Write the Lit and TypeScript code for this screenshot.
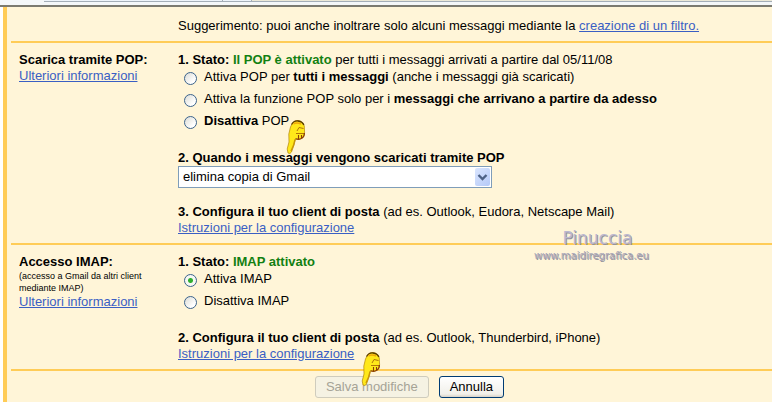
import { LitElement, html, css, nothing } from "lit";
import { customElement } from "lit/decorators.js";

@customElement("pointing-hand")
class PointingHand extends LitElement {
  static styles = css`
    :host { display: block; width: 20px; height: 36px; pointer-events: none; }
    svg { display: block; }
  `;
  render() {
    return html`<svg width="20" height="36" viewBox="0 0 20 36" aria-hidden="true">
      <path d="M2 34 L1.2 30 L3 23 L2.8 15 L4.5 8 L6 5 Q8 1 12 1.5 Q17 2 18.3 7 L18.6 14 Q18.5 18.5 15.5 19.5 L12.5 20.5 L9.5 20 L8 26 L5.5 33 Q4 35.5 2 34Z" fill="#ffe81a" stroke="#b08408" stroke-width="0.7"/>
      <path d="M5.5 5.5 Q8 1.5 12 2 Q16.5 2.5 17.8 6" fill="none" stroke="#5a3c00" stroke-width="1.3"/>
      <path d="M7.5 4.8 Q11 3 15 5" fill="none" stroke="#f0a80c" stroke-width="1.6"/>
      <path d="M17.5 9.5 L13 8.5 L11 12 M10 14.5 L18 14.5" fill="none" stroke="#a86808" stroke-width="0.9"/>
      <path d="M9.5 19.8 L12.5 20.4 L15.5 19.4 Q18.3 18 18.5 14 M12.5 16 V20 M15.5 16 V19" fill="none" stroke="#8a3c08" stroke-width="1.1"/>
      <path d="M9 20.5 L7.6 26 L5 32" fill="none" stroke="#c89408" stroke-width="1.3"/>
    </svg>`;
  }
}

@customElement("app-root")
class AppRoot extends LitElement {
  static styles = css`
    :host {
      display: block;
      min-height: 100vh;
      overflow: hidden;
      background: #fff;
      color: #000;
      font: 13px/16px "Liberation Sans", Arial, sans-serif;
    }
    * { box-sizing: border-box; }
    .chrome {
      height: 7px;
      background: #f4f7f9;
      border-bottom: 2px solid #7b7a70;
    }
    .field {
      display: grid;
      grid-template-columns: 179px 29px 1fr;
      height: 2px;
      margin-left: 44px;
      border-bottom: 1px solid #a4aeb8;
      background: #eef4fa;
    }
    .field span { border-right: 1px solid #a4aeb8; }
    .field span:last-child { border: 0; background: #ece9d8; }
    .panel {
      margin-left: 3px;
      padding-left: 4px;
      min-height: calc(100vh - 7px);
      border-left: 4px solid #ffcc57;
      background: #fff5d8;
    }
    .row {
      position: relative;
      display: grid;
      grid-template-columns: 159px minmax(0, 1fr);
      padding: 9px 0 7px 8px;
      border-bottom: 2px solid #ffcc57;
    }
    .tip { padding-top: 11px; }
    .tip .body { grid-column: 2; }
    h2, h3, p, fieldset { margin: 0; padding: 0; border: 0; font-size: 13px; min-width: 0; }
    h3 { font-weight: 400; }
    p.small { font-size: 9px; line-height: 12px; }
    a { color: #3a5fc4; }
    .on { color: #128012; }
    .option {
      position: relative;
      display: flex;
      align-items: center;
      gap: 7px;
      height: 22px;
      padding: 0 0 2px 6px;
    }
    .option label { padding-bottom: 2px; }
    .option input {
      appearance: none;
      flex: none;
      width: 13px;
      height: 13px;
      margin: 0;
      border: 1px solid #3b638c;
      border-radius: 50%;
      background: linear-gradient(135deg, #dcdcd6, #fff 75%);
    }
    .option input:checked {
      background: radial-gradient(circle, #2fae2f 0 2px, #f7f8f3 3px);
    }
    .option pointing-hand { position: absolute; z-index: 1; top: 7px; left: 108px; }
    .step { margin-top: 16px; }
    .step label { display: block; }
    .select { position: relative; width: 314px; max-width: 100%; height: 22px; }
    select {
      appearance: none;
      display: block;
      width: 100%;
      height: 22px;
      padding: 0 20px 0 4px;
      border: 1px solid #7f9db9;
      border-radius: 0;
      background: #fff;
      color: #000;
      font: inherit;
    }
    .arrow {
      position: absolute;
      top: 2px;
      right: 2px;
      width: 15px;
      height: 18px;
      border-radius: 2px;
      background: linear-gradient(135deg, #dbe6fe, #b4c9f8);
      pointer-events: none;
    }
    .arrow svg { display: block; }
    .actions { display: flex; justify-content: center; gap: 10px; padding: 5px 0 4px 36px; }
    button {
      height: 22px;
      padding: 0 10px;
      border: 1px solid #003c74;
      border-radius: 3px;
      background: linear-gradient(#fff, #f1f0ea 85%, #d8d2c6);
      color: #000;
      font: inherit;
    }
    button:disabled { border-color: #cfccbd; background: #f5f2e3; color: #a5a396; }
    .save { position: relative; }
    .save pointing-hand { position: absolute; bottom: 11px; left: 46px; }
    .mark {
      position: absolute;
      z-index: 1;
      top: -17px;
      left: 523px;
      text-align: center;
      font-family: "Comic Sans MS", "DejaVu Sans", sans-serif;
      font-size: 10px;
      color: #aaa7b8;
      text-shadow: 1px 1px 0 #95939c;
    }
    .name { display: block; padding-left: 12px; font-size: 17px; line-height: 20px; color: #bcb8d0; }
  `;

  radio(group: string, id: string, label: unknown, checked = false, pointed = false) {
    return html`<div class="option">
      <input type="radio" name=${group} id=${id} ?checked=${checked} />
      <label for=${id}>${label}</label>
      ${pointed ? html`<pointing-hand></pointing-hand>` : nothing}
    </div>`;
  }

  render() {
    return html`
      <div class="chrome"><div class="field"><span></span><span></span><span></span></div></div>
      <main class="panel">
        <section class="row tip">
          <p class="body">Suggerimento: puoi anche inoltrare solo alcuni messaggi mediante la <a href="#filtro">creazione di un filtro.</a></p>
        </section>

        <section class="row">
          <div>
            <h2>Scarica tramite POP:</h2>
            <a href="#pop">Ulteriori informazioni</a>
          </div>
          <div>
            <fieldset>
              <h3><b>1. Stato: <span class="on">Il POP è attivato</span></b> per tutti i messaggi arrivati a partire dal 05/11/08</h3>
              ${this.radio("pop", "pop-all", html`Attiva POP per <b>tutti i messaggi</b> (anche i messaggi già scaricati)`)}
              ${this.radio("pop", "pop-new", html`Attiva la funzione POP solo per i <b>messaggi che arrivano a partire da adesso</b>`)}
              ${this.radio("pop", "pop-off", html`<b>Disattiva</b> POP`, false, true)}
            </fieldset>
            <div class="step">
              <label for="after"><b>2. Quando i messaggi vengono scaricati tramite POP</b></label>
              <div class="select">
                <select id="after"><option>elimina copia di Gmail</option></select>
                <span class="arrow"><svg width="15" height="18" viewBox="0 0 15 18" aria-hidden="true"><path d="M3.5 7 L7.5 11 L11.5 7" fill="none" stroke="#4d6185" stroke-width="2.4"/></svg></span>
              </div>
            </div>
            <div class="step">
              <h3><b>3. Configura il tuo client di posta</b> (ad es. Outlook, Eudora, Netscape Mail)</h3>
              <a href="#pop-config">Istruzioni per la configurazione</a>
            </div>
          </div>
        </section>

        <section class="row">
          <div>
            <h2>Accesso IMAP:</h2>
            <p class="small">(accesso a Gmail da altri client<br />mediante IMAP)</p>
            <a href="#imap">Ulteriori informazioni</a>
          </div>
          <div>
            <fieldset>
              <h3><b>1. Stato: <span class="on">IMAP attivato</span></b></h3>
              ${this.radio("imap", "imap-on", "Attiva IMAP", true)}
              ${this.radio("imap", "imap-off", "Disattiva IMAP")}
            </fieldset>
            <div class="step">
              <h3><b>2. Configura il tuo client di posta</b> (ad es. Outlook, Thunderbird, iPhone)</h3>
              <a href="#imap-config">Istruzioni per la configurazione</a>
            </div>
          </div>
          <div class="mark"><span class="name">Pinuccia</span>www.maidiregrafica.eu</div>
        </section>

        <div class="actions">
          <div class="save"><button disabled>Salva modifiche</button><pointing-hand></pointing-hand></div>
          <button>Annulla</button>
        </div>
      </main>
    `;
  }
}
